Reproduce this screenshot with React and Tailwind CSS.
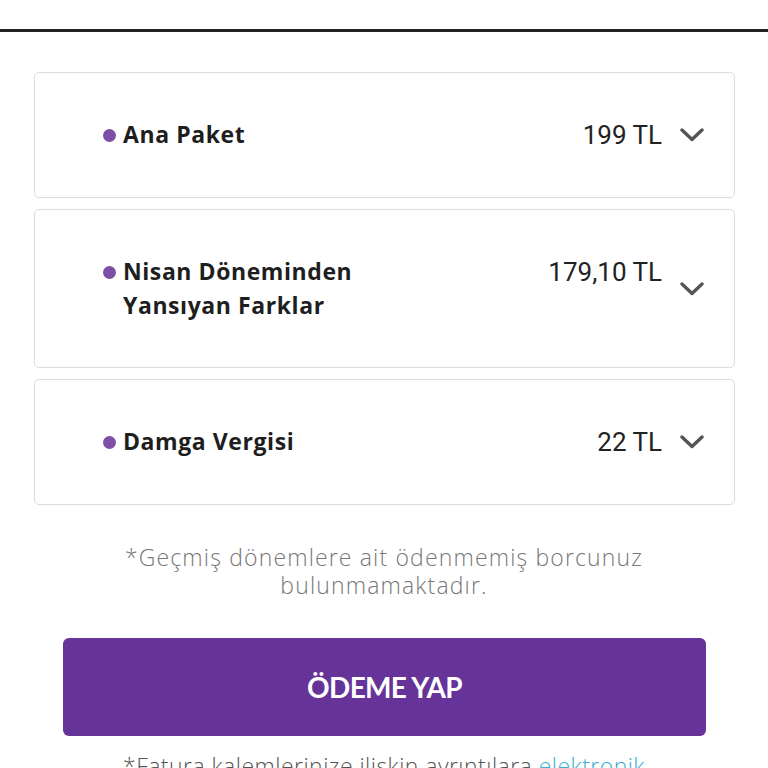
const items = [
  { label: ["Ana Paket"], price: "199 TL" },
  { label: ["Nisan Döneminden", "Yansıyan Farklar"], price: "179,10 TL" },
  { label: ["Damga Vergisi"], price: "22 TL" },
];

function Chevron() {
  return (
    <svg viewBox="0 0 24 14" className="ml-[18px] h-[14px] w-[24px] shrink-0" fill="none">
      <polyline points="2,2 12,11.5 22,2" stroke="#555" strokeWidth="3.4" strokeLinecap="round" strokeLinejoin="round" />
    </svg>
  );
}

function BillRow({ label, price }) {
  return (
    <div className="flex items-center rounded-[5px] border border-[#dcdcdc] bg-white py-[45px] pl-[68px] pr-[30px]">
      <div className="flex flex-1 items-start">
        <div className="flex h-[34px] items-center pr-[7px]">
          <span className="block h-[13px] w-[13px] rounded-full bg-[#7d4fa6]" />
        </div>
        <div className="-mt-[1px] font-['Open_Sans',sans-serif] text-[23px] font-bold leading-[34px] tracking-[0.025em] text-[#1e1e1e]">
          {label.map((line) => (
            <div key={line}>{line}</div>
          ))}
        </div>
      </div>
      <div className="self-start font-['Roboto',sans-serif] text-[26px] leading-[34px] text-[#222]">
        {price}
      </div>
      <Chevron />
    </div>
  );
}

export default function App() {
  return (
    <div className="min-h-[768px] overflow-hidden bg-white font-['Open_Sans',sans-serif]">
      <div className="h-[29px]" />
      <div className="h-[3px] bg-[#222]" />

      <div className="flex flex-col gap-[11px] pl-[34px] pr-[33px] pt-[40px]">
        {items.map((item) => (
          <BillRow key={item.price} {...item} />
        ))}
      </div>

      <p className="mx-auto mt-[38px] max-w-[580px] text-center text-[23px] font-light leading-[28px] tracking-[0.05em] text-[#777]">
        *Geçmiş dönemlere ait ödenmemiş borcunuz bulunmamaktadır.
      </p>

      <div className="pl-[63px] pr-[62px] pt-[39px]">
        <button className="flex h-[98px] w-full items-center justify-center rounded-[6px] bg-[#663399] font-['Lato',sans-serif] text-[28px] font-bold tracking-tight text-white">
          ÖDEME YAP
        </button>
      </div>

      <p className="mx-auto mt-[16px] max-w-[560px] text-center text-[23px] font-light leading-[28px] tracking-[0.02em] text-[#555]">
        *Fatura kalemlerinize ilişkin ayrıntılara{" "}
        <span className="text-[#3aaed0]">elektronik</span> faturanızdan ulaşabilirsiniz.
      </p>
    </div>
  );
}
